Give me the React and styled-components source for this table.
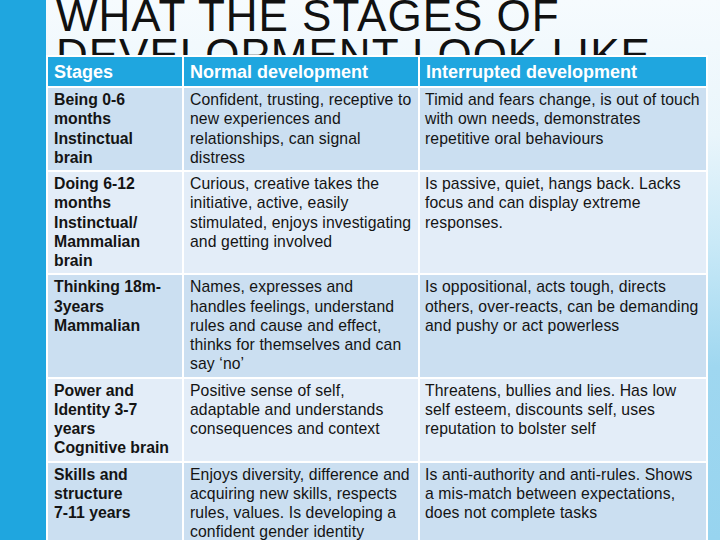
import React from "react";
import styled, { createGlobalStyle } from "styled-components";

const Global = createGlobalStyle`
  html, body { margin: 0; padding: 0; }
  body { width: 720px; height: 540px; overflow: hidden; font-family: "Liberation Sans", Arial, sans-serif; }
`;

const Slide = styled.div`
  display: flex;
  width: 720px;
  height: 540px;
  overflow: hidden;
`;

const SideBar = styled.div`
  flex: 0 0 46px;
  background: #1fa6df;
`;

const Content = styled.div`
  flex: 1;
  display: flex;
  flex-direction: column;
  background: linear-gradient(180deg, #f6fbfe 0%, #e9f5fb 25%, #c9e9f7 45%, #9fd7f0 68%, #97d4ef 100%);
`;

const Title = styled.h1`
  margin: 0;
  flex: 0 0 55px;
  height: 55px;
  padding-left: 10px;
  font-family: "Liberation Sans", Arial, sans-serif;
  font-weight: 400;
  font-size: 44px;
  line-height: 39px;
  color: #111;
  letter-spacing: 1px;
  white-space: nowrap;
  position: relative;
  top: -4px;
`;

const Table = styled.div`
  position: relative;
  z-index: 1;
  width: 662px;
  box-sizing: border-box;
  display: grid;
  grid-template-columns: 134px 234px 286px;
  gap: 2px;
  padding: 2px;
  background: #ffffff;
`;

const HeadCell = styled.div`
  background: #1fa6df;
  color: #ffffff;
  font-weight: 700;
  font-size: 18px;
  line-height: 20px;
  padding: 5px 6px 4px;
  white-space: nowrap;
`;

const Cell = styled.div`
  background: ${(p) => (p.$alt ? "#e3edf8" : "#cbdff1")};
  color: #141414;
  font-size: ${(p) => (p.$stage ? "15.8px" : "15.75px")};
  line-height: 19.25px;
  padding: ${(p) => (p.$last ? "2px 5px 3px 5px" : "2px 6px 3px 6px")};
  font-weight: ${(p) => (p.$stage ? 700 : 400)};
  letter-spacing: ${(p) => (p.$stage ? "0" : "0.1px")};
`;

const rows = [
  {
    stage: ["Being 0-6", "months", "Instinctual", "brain"],
    normal: "Confident, trusting, receptive to new experiences and relationships, can signal distress",
    interrupted: "Timid and fears change, is out of touch with own needs, demonstrates repetitive oral behaviours",
  },
  {
    stage: ["Doing 6-12", "months", "Instinctual/", "Mammalian", "brain"],
    normal: "Curious, creative takes the initiative, active, easily stimulated, enjoys investigating and getting involved",
    interrupted: "Is passive, quiet, hangs back. Lacks focus and can display extreme responses.",
  },
  {
    stage: ["Thinking 18m-", "3years", "Mammalian"],
    normal: "Names, expresses and handles feelings, understand rules and cause and effect, thinks for themselves and can say ‘no’",
    interrupted: "Is oppositional, acts tough, directs others, over-reacts, can be demanding and pushy or act powerless",
  },
  {
    stage: ["Power and", "Identity 3-7", "years", "Cognitive brain"],
    normal: "Positive sense of self, adaptable and understands consequences and context",
    interrupted: "Threatens, bullies and lies. Has low self esteem, discounts self, uses reputation to bolster self",
  },
  {
    stage: ["Skills and", "structure", "7-11 years"],
    normal: "Enjoys diversity, difference and acquiring new skills, respects rules, values. Is developing a confident gender identity",
    interrupted: "Is anti-authority and anti-rules. Shows a mis-match between expectations, does not complete tasks",
  },
];

export default function App() {
  return (
    <Slide>
      <Global />
      <SideBar />
      <Content>
        <Title>
          WHAT THE STAGES OF
          <br />
          DEVELOPMENT LOOK LIKE
        </Title>
        <Table>
          <HeadCell>Stages</HeadCell>
          <HeadCell>Normal development</HeadCell>
          <HeadCell>Interrupted development</HeadCell>
          {rows.map((r, i) => (
            <React.Fragment key={i}>
              <Cell $stage $alt={i % 2 === 1}>
                {r.stage.map((s, j) => (
                  <React.Fragment key={j}>
                    {s}
                    {j < r.stage.length - 1 && <br />}
                  </React.Fragment>
                ))}
              </Cell>
              <Cell $alt={i % 2 === 1}>{r.normal}</Cell>
              <Cell $alt={i % 2 === 1} $last>{r.interrupted}</Cell>
            </React.Fragment>
          ))}
        </Table>
      </Content>
    </Slide>
  );
}
